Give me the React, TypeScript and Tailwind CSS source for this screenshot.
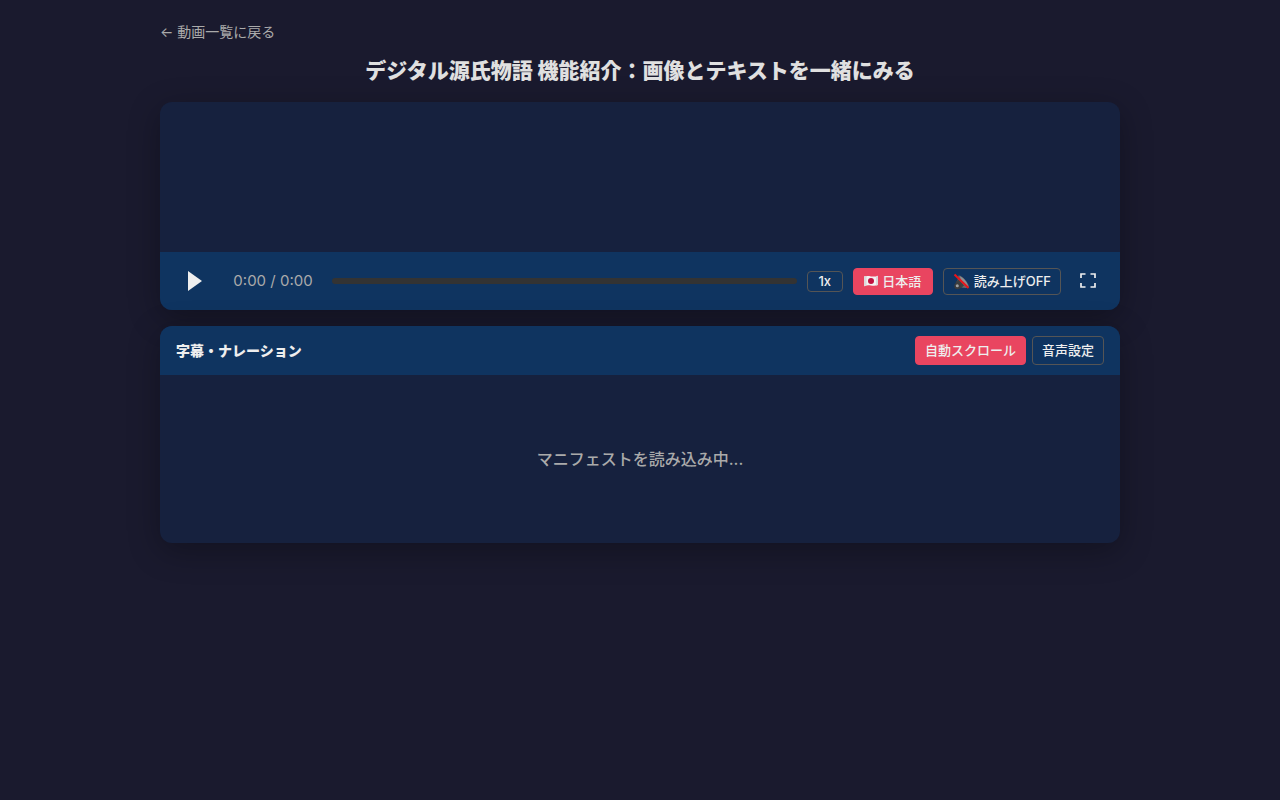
import { useState } from 'react';

function FlagIcon() {
  return (
    <svg width="14" height="12" viewBox="0 0 14 12" aria-hidden="true">
      <path d="M0 1.600C2.500.8 4.500 1 7 1.400S11.500 1.700 14 .8V10C11.500 11 9.500 10.900 7 10.500S2.500 10.200 0 11.200Z" fill="#f4f1f1" />
      <path d="M0 1.600C1 1.300 1.700 1.200 2.500 1.100V10.400C1.700 10.500 .8 10.800 0 11.200Z" fill="#dcd9da" />
      <path d="M12 1.400C12.800 1.300 13.400 1.100 14 .8V10C13.300 10.300 12.700 10.500 12 10.600Z" fill="#dcd9da" />
      <circle cx="7" cy="6" r="3" fill="#c1123f" />
    </svg>
  );
}

function MutedIcon() {
  return (
    <svg width="17" height="17" viewBox="0 0 17 17" aria-hidden="true">
      <path d="M5.500 2.500C8.500 1.800 15.500 9.500 16 14C13.500 15.500 10 15 8 14L4 10Z" fill="#67696c" />
      <path d="M7 3.500C10.500 4.500 14.500 9.500 15 13.500C12 13 7.500 8.500 7 3.500Z" fill="#8d8f92" />
      <path d="M2.500 9L6 6.500L11 12.500L7.500 15.500Z" fill="#3e4042" />
      <circle cx="4.500" cy="13" r="3.200" fill="#3c3c3d" />
      <circle cx="4.300" cy="12.700" r="1.500" fill="#a0a2a4" />
      <path d="M1.500 1.500L15.500 15" stroke="#e8141a" strokeWidth="2" />
    </svg>
  );
}

const base = 'flex items-center justify-center rounded border text-[13px] leading-[19px] font-medium px-[9px] cursor-pointer whitespace-nowrap';
const active = 'border-[#e94560] bg-[#e94560] text-[#eee]';
const inactive = 'border-[#555] bg-transparent text-[#eee]';

export default function App() {
  const [playing, setPlaying] = useState(false);
  const [autoScroll, setAutoScroll] = useState(true);

  return (
    <div className="min-h-screen bg-[#1a1a2e] px-4 py-5 font-[Inter,'Noto_Sans_CJK_JP',sans-serif] text-[#eee]">
      <main className="mx-auto max-w-[960px]">
        <a href="#" className="block w-fit text-sm leading-6 text-[#aaa]">
          ← 動画一覧に戻る
        </a>
        <h1 className="mt-3 mb-4 text-center text-[21px] leading-[30px] font-extrabold text-[#e0e0e0]">
          デジタル源氏物語 機能紹介：画像とテキストを一緒にみる
        </h1>

        <section className="mb-4 overflow-hidden rounded-xl bg-[#16213e] shadow-[0_8px_32px_rgba(0,0,0,0.3)]">
          <div className="h-[150px]" />
          <div className="flex h-[58px] items-center gap-2.5 bg-[#0f3460] px-4">
            <button
              type="button"
              aria-label="再生"
              aria-pressed={playing}
              onClick={() => setPlaying(!playing)}
              className="flex h-9 w-[38px] cursor-pointer items-center justify-center"
            >
              <svg width="14" height="20" viewBox="0 0 14 20" fill="#eee">
                <path d="M0 0L14 10L0 20Z" />
              </svg>
            </button>
            <span className="w-[98px] text-center text-[15px] text-[#aaa]">0:00 / 0:00</span>
            <div className="h-1.5 flex-1 rounded-full bg-[#333]" />
            <button type="button" className={`${base} ${inactive} h-[21px] w-9`}>1x</button>
            <button type="button" className={`${base} ${active} h-[27px] w-20 gap-1`}>
              <FlagIcon />
              日本語
            </button>
            <button type="button" className={`${base} ${inactive} h-[27px] gap-1`}>
              <MutedIcon />
              読み上げOFF
            </button>
            <button type="button" aria-label="全画面" className="flex h-9 w-[33px] cursor-pointer items-center justify-center">
              <svg width="16" height="16" viewBox="0 0 16 16" fill="none" stroke="#eee" strokeWidth="1.700">
                <path d="M1 5V1H5.500M10.500 1H15V5M15 10V14H10.500M5.500 14H1V10" />
              </svg>
            </button>
          </div>
        </section>

        <section className="overflow-hidden rounded-xl bg-[#16213e] shadow-[0_8px_32px_rgba(0,0,0,0.3)]">
          <div className="flex h-[49px] items-center justify-between bg-[#0f3460] px-4">
            <h2 className="text-sm font-extrabold">字幕・ナレーション</h2>
            <div className="flex gap-1.5">
              <button
                type="button"
                aria-pressed={autoScroll}
                onClick={() => setAutoScroll(!autoScroll)}
                className={`${base} ${autoScroll ? active : inactive} h-[29px]`}
              >
                自動スクロール
              </button>
              <button type="button" className={`${base} ${inactive} h-[29px]`}>音声設定</button>
            </div>
          </div>
          <div className="flex h-[168px] items-center justify-center text-base font-medium text-[#aaa]">
            マニフェストを読み込み中...
          </div>
        </section>
      </main>
    </div>
  );
}
